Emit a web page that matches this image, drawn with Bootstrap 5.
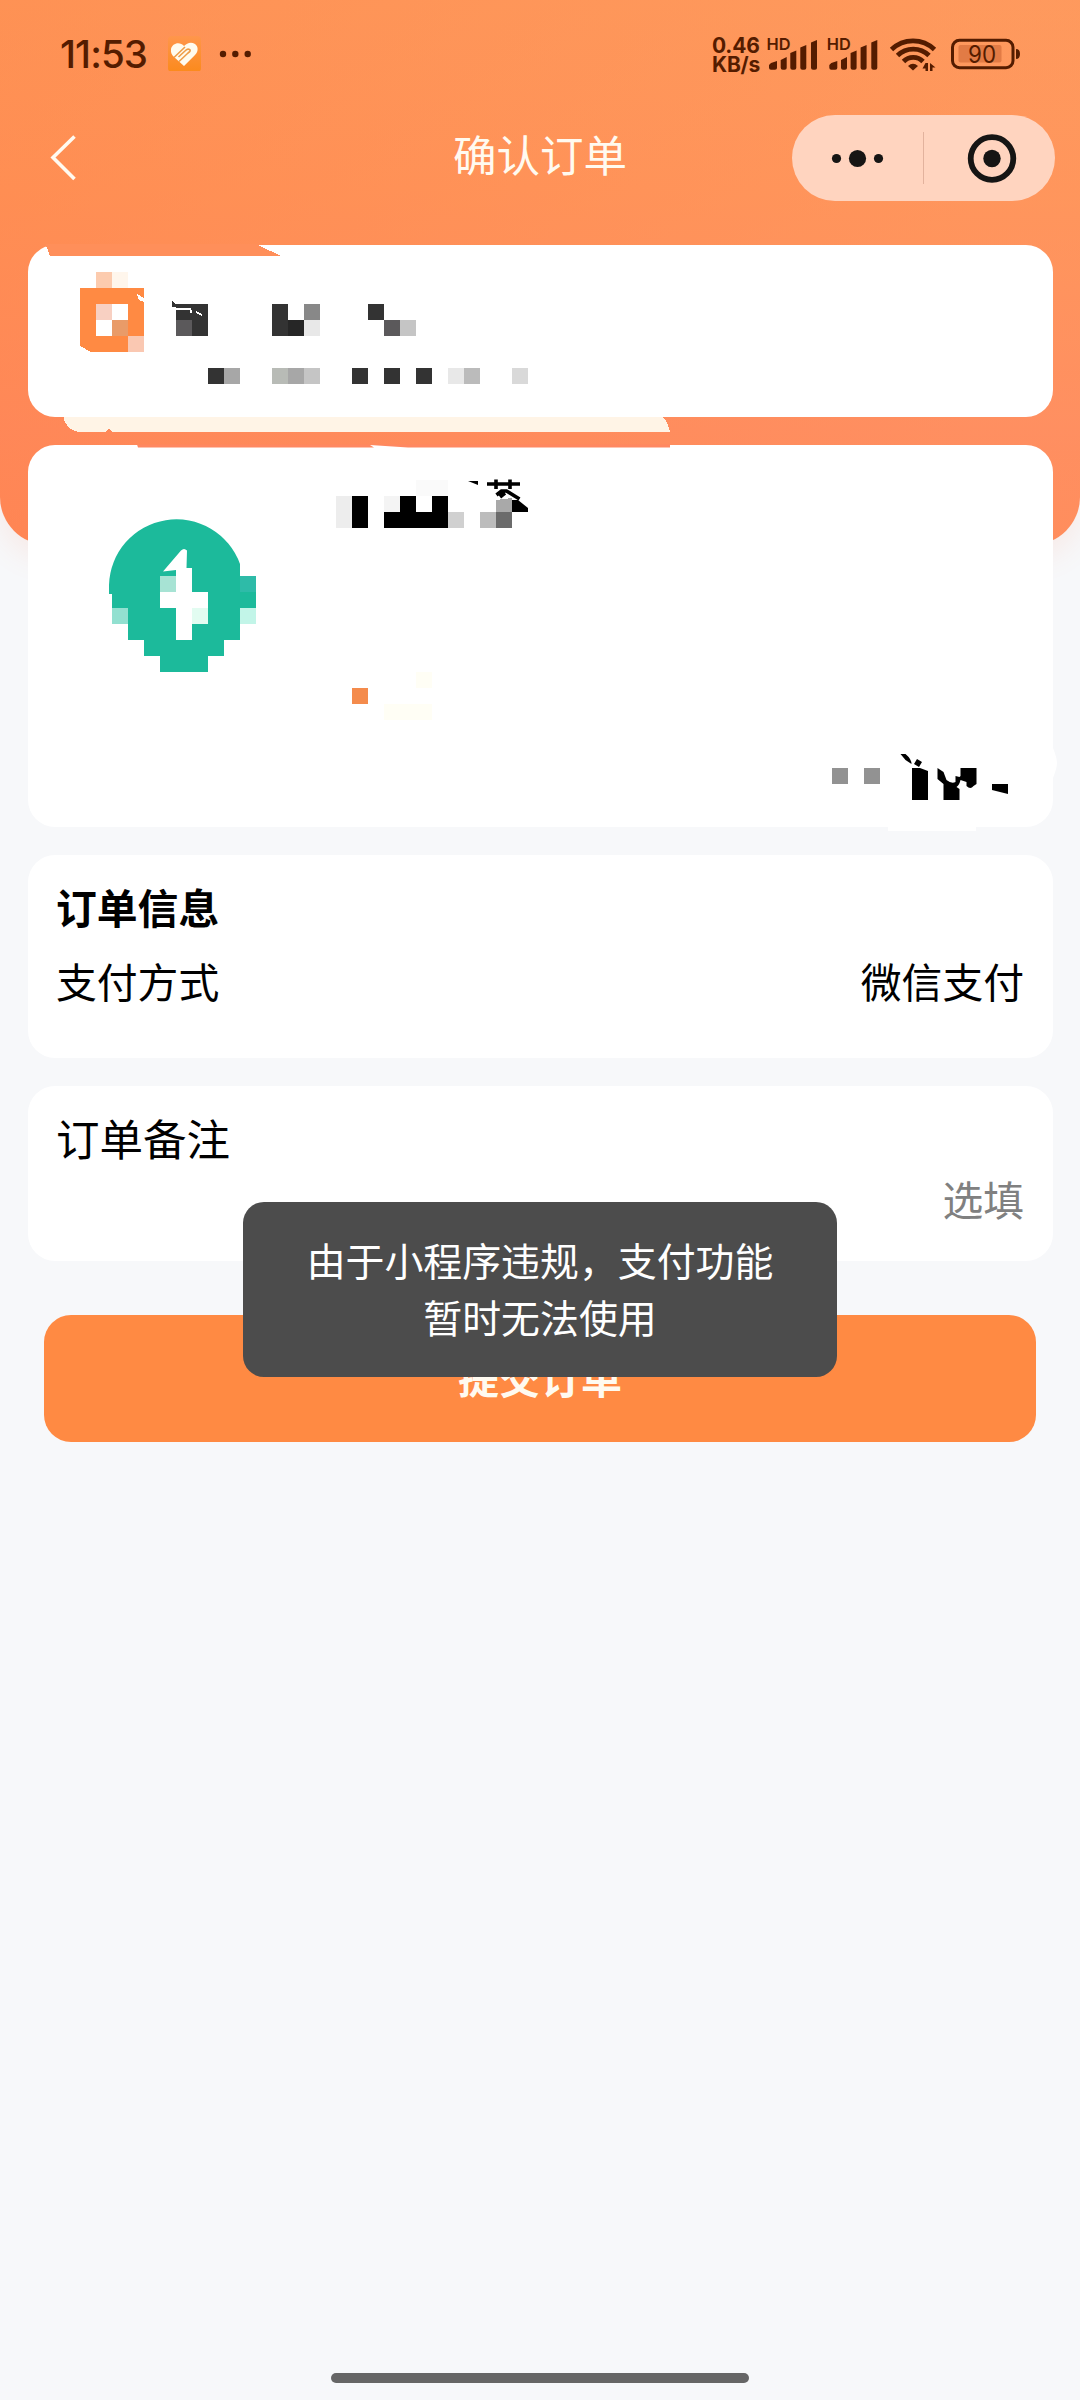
<!DOCTYPE html>
<html lang="zh-CN">
<head>
<meta charset="utf-8">
<meta name="viewport" content="width=device-width, initial-scale=1">
<title>确认订单</title>
<link rel="stylesheet" href="https://cdn.jsdelivr.net/npm/bootstrap@5.3.0/dist/css/bootstrap.min.css">
<style>
body{width:1080px;height:2400px;background:#f7f8fa;color:#000;font-family:"Noto Sans CJK SC",sans-serif;overflow:hidden}
svg{display:block;flex:none}
.backdrop{left:0;top:0;width:1080px;height:545px;border-radius:0 0 48px 48px;background:linear-gradient(90deg,rgba(255,138,72,.35),rgba(255,160,98,.35) 90%),linear-gradient(180deg,#fe965b 0,#ff9059 190px,#ff8660 430px,#ff835a 100%);box-shadow:0 12px 30px rgba(255,131,90,.12)}
.screen{z-index:1;height:2400px}
.statusbar{height:106px;padding:0 60px 0 60px;color:#541c00;font-family:Inter,"Open Sans",sans-serif}
.clock{font-size:38.5px;font-weight:500;line-height:1;letter-spacing:-.9px;width:108px;padding-top:2px}
.netspeed{font-size:21px;font-weight:700;line-height:19px;letter-spacing:-.2px;width:54px}
.navrow{height:103px;padding:0 25px 0 47px}
.page-title{font-size:43.5px;line-height:60px;color:#fffaf0;padding-bottom:7px}
.capsule{width:263px;height:86px;border-radius:43px;background:#ffd4bf}
.stack{padding:36px 27px 0 28px;gap:28px}
.panel{background:#fff;border-radius:27px}
.shop{height:172px}
.goods{height:382px}
.info{height:203px;padding:22px 29px 0 28px}
.note{height:175px;padding:20px 29px 0 28px}
.t40{font-size:40.8px;line-height:60px}
.t43{font-size:43.5px;line-height:63px}
.muted{color:#808080}
.art{left:-28px;overflow:visible}
.submit{height:127px;margin:54px 44px 0;padding:0 0 5px;border:0;border-radius:27px;background:#ff8a43;color:#fffaf0;font-size:41px;font-weight:700;line-height:60px}
.notice{left:243px;top:1202px;width:594px;height:175px;padding-bottom:4px;border-radius:21px;background:#4c4c4c;color:#fff;font-size:38.9px;line-height:57px;z-index:3}
.homebar{width:418px;height:10px;border-radius:5px;background:#666;margin-bottom:17px}
</style>
<script src="https://cdn.jsdelivr.net/npm/bootstrap@5.3.0/dist/js/bootstrap.bundle.min.js"></script>
</head>
<body class="position-relative">
<div class="backdrop position-absolute"></div>
<div class="screen position-relative d-flex flex-column">
  <header class="statusbar d-flex justify-content-between align-items-center">
    <div class="d-flex align-items-center">
      <div class="clock">11:53</div>
      <svg width="84" height="36" viewBox="168 35 84 36">
        <defs><linearGradient id="tile" x2="0" y2="1"><stop stop-color="#ff964c"/><stop offset="1" stop-color="#fb8a1c"/></linearGradient></defs>
        <rect x="168" y="36" width="33" height="36" rx="4" fill="url(#tile)"/>
        <path d="M184 46c-4-5-12-3-13 3-.5 4 1 6 3 8l10 9 11-11c4-4 3-9 0-11-4-2.500-8-1-11 2z" fill="#fffbee"/>
        <path d="M174 57.500l11-10.500M179 61.500l9-8.500q3.500-2.500 1.500-3.500t-4 1l-7 6.500" fill="none" stroke="#ee9d48" stroke-width="1.600"/>
        <g fill="#541c00"><circle cx="223" cy="54" r="3.200"/><circle cx="235.300" cy="54" r="3.200"/><circle cx="247.700" cy="54" r="3.200"/></g>
      </svg>
    </div>
    <div class="d-flex align-items-center">
      <div class="netspeed pt-1"><div>0.46</div><div>KB/s</div></div>
      <svg width="254" height="36" viewBox="766 35 254 36" fill="#541c00">
        <defs><g id="sig"><text x="766.500" y="50.300" font-size="16.500" font-weight="600" textLength="24" lengthAdjust="spacingAndGlyphs">HD</text>
        <path d="M769 65l2-2 6-2v7q0 1.700-2 1.700h-4q-2 0-2-2zM780.700 60l6-3v11q0 1.700-2 1.700h-2q-2 0-2-2zM790.300 53l6-2.500V68q0 1.700-2 1.700h-2q-2 0-2-2zM800.300 47.500l6-2.500v23q0 1.700-2 1.700h-2q-2 0-2-2zM811 42.500l6-2.500v28q0 1.700-2 1.700h-2q-2 0-2-2z"/></g></defs>
        <use href="#sig"/><use href="#sig" x="60.300"/>
        <g fill="none" stroke="#541c00" stroke-width="4.800"><path d="M891.500 49.500a31 31 0 0 1 43 0M897.500 55.500a22.500 22.500 0 0 1 31.500 0M903.500 61.500a13.500 13.500 0 0 1 19.500 0"/></g>
        <path d="M908 66q5-4.500 10 0l-5 4.500z"/><path d="M925.500 63h2.500v9h-2.500v-3.500h-3zM930 63v8.500h2.500v-4h3z"/>
        <rect x="958.500" y="45" width="43" height="17.500" rx="2" fill="#e27b45"/>
        <rect x="952.500" y="40.300" width="60.500" height="27.400" rx="7" fill="none" stroke="#541c00" stroke-width="3"/>
        <path d="M1016 49q4 0 4 5t-4 5z"/>
        <text x="968" y="62.700" font-size="24" font-weight="400" textLength="28" lengthAdjust="spacingAndGlyphs">90</text>
      </svg>
    </div>
  </header>

  <nav class="navrow d-flex align-items-center justify-content-between position-relative">
    <svg width="32" height="50" viewBox="47 132 32 50" fill="none" stroke="#fffaf0" stroke-width="3.600"><path d="M74.500 135.500L53 156.500l21.500 21.500"/></svg>
    <div class="page-title position-absolute start-50 translate-middle-x">确认订单</div>
    <div class="capsule">
      <svg width="263" height="86" viewBox="792 115 263 86" fill="#161514">
        <circle cx="836.500" cy="158.500" r="4.600"/><circle cx="857.500" cy="158.500" r="8.600"/><circle cx="878.500" cy="158.500" r="4.600"/>
        <path d="M923.500 132v52" stroke="#e2b29d" stroke-width="1"/>
        <circle cx="992" cy="158.500" r="21.300" fill="none" stroke="#161514" stroke-width="5.800"/><circle cx="992" cy="158.500" r="8.700"/>
      </svg>
    </div>
  </nav>

  <main class="stack d-flex flex-column">
    <section class="panel shop position-relative">
      <svg class="art position-absolute top-0" width="1080" height="200" viewBox="0 245 1080 200" shape-rendering="crispEdges">
        <path d="M44 244h1.500l4.500 12h231l-23-11v-1z" fill="#ff8f5a"/>
        <path d="M64 417v3q5 12 17 12h24l4-4 3 4h558q-2-10-7-15z" fill="#fff4e6"/>
        <path fill="#fccbae" d="M96 272h16v16H96z"/><path fill="#fff6ec" d="M112 272h16v16h-16z"/>
        <path fill="#ff8a43" d="M80 288h64v64H91l-11-6z"/>
        <path fill="#f8d0c2" d="M96 304h16v16H96z"/><path fill="#fff" d="M112 304h16v16h-16zM96 320h16v16H96zM137 294l7 4v4l-5-2z"/>
        <path fill="#e99b68" d="M112 320h16v16h-16z"/><path fill="#fac8b2" d="M128 336h16v16h-16z"/>
        <path fill="#333" d="M176 304h32v32h-32zM272 304h16v32h-16zM368 304h16v16h-16zM208 368h16v16h-16zM352 368h16v16h-16zM384 368h16v16h-16zM416 368h16v16h-16zM172 301l4 3h14l2 2h-6l-4 1h-10z"/>
        <path fill="#5b595b" d="M176 320h16v16h-16zM384 320h16v16h-16z"/>
        <path d="M172 308.500h16q3 0 3 4M196 312l6 3" fill="none" stroke="#fff" stroke-width="2"/>
        <path fill="#262626" d="M288 320h16v16h-16z"/><path fill="#888" d="M304 304h16v16h-16z"/><path fill="#e8e8e8" d="M304 320h16v16h-16zM448 368h16v16h-16z"/>
        <path fill="#c5c5c5" d="M400 320h16v16h-16zM304 368h16v16h-16z"/><path fill="#a7a7a7" d="M224 368h16v16h-16zM288 368h16v16h-16z"/>
        <path fill="#b8bbb6" d="M272 368h16v16h-16z"/><path fill="#bbb" d="M464 368h16v16h-16z"/><path fill="#d9d9d9" d="M512 368h16v16h-16z"/>
      </svg>
    </section>

    <section class="panel goods position-relative">
      <svg class="art position-absolute top-0" width="1080" height="388" viewBox="0 445 1080 388">
        <path d="M137 444.500h533v3H408l-38-2.500 4 2.500H138z" fill="#ff8861"/>
        <path d="M888 825h88v6h-88zM1053 748q4 10 4 15t-4 15z" fill="#fff"/>
        <path fill="#1cba9b" d="M109 594v-9a67.500 67.500 0 0 1 131-21v12h16v32h-16v32h-16v16h-16v16h-48v-16h-16v-16h-16v-32h-16v-14z"/>
        <path fill="#fff" d="M163 571.500l18-21q3-3 6 0l-.5 17.500h5.500v24h16v32h-16v16h-16v-32h-16v-16h16v-22z"/>
        <path fill="#a7e3d4" d="M160 576h16v16h-16z"/><path fill="#e2fcf1" d="M192 608h16v16h-16z"/>
        <path fill="#92e0d0" d="M112 608h16v16h-16z"/><path fill="#c2f5e8" d="M240 608h16v16h-16z"/><path fill="#2ebba8" d="M240 576h16v16h-16z"/>
        <g shape-rendering="crispEdges">
          <path fill="#ededed" d="M336 496h16v32h-16z"/><path fill="#f4f4f4" d="M384 496h16v16h-16z"/><path fill="#fafafa" d="M416 480h32v16h-32z"/>
          <path d="M352 496h16v32h-16zM384 512h16v-16h16v16h16v-16h16v32h-64z"/>
          <path fill="#d0d0d0" d="M448 512h16v16h-16z"/><path fill="#bcbcbc" d="M480 512h16v16h-16z"/><path fill="#6b6b6b" d="M496 512h16v16h-16z"/><path fill="#a9a9a9" d="M496 500l16-2v14h-16z"/>
          <path fill="#f48b4c" d="M352 688h16v16h-16z"/><path fill="#fffef5" d="M416 672h16v16h-16zM384 704h48v16h-48z"/>
          <path fill="#929292" d="M832 768h16v16h-16zM864 768h16v16h-16z"/>
        </g>
        <path d="M468 481h10v4zM512 500h6l10 8v4h-16z"/>
        <path d="M487 484h33M496 479.500v9.500M510 479.500v9.500M496.500 495l5-4h5l13 8M500 497l5-4" fill="none" stroke="#000" stroke-width="3.600"/>
        <path d="M900.500 754h5q6 5 6 10l-6-4zM917 759l5 3-3 5-5-3zM912 768h8l8 3v29h-16zM937.500 768l6 4 3 8q5 4 9 2v-6l4 1 1-1v-8h16v16l-3 2q-3 4-7 0v-4l-6-2q-1 5-4 7l3 2v11h-16v-16l-6-5zM992 784h16v10l-16-4z"/>
      </svg>
    </section>

    <section class="panel info">
      <div class="t40 fw-bold">订单信息</div>
      <div class="t40 d-flex justify-content-between" style="margin-top:14px"><span>支付方式</span><span>微信支付</span></div>
    </section>

    <section class="panel note">
      <div class="t43">订单备注</div>
      <div class="t40 muted text-end">选填</div>
    </section>
  </main>

  <button type="button" class="submit btn">提交订单</button>
  <div class="homebar mt-auto mx-auto"></div>
</div>
<div class="notice position-absolute d-flex align-items-center justify-content-center text-center">
  <div>由于小程序违规，支付功能<br>暂时无法使用</div>
</div>
</body>
</html>
